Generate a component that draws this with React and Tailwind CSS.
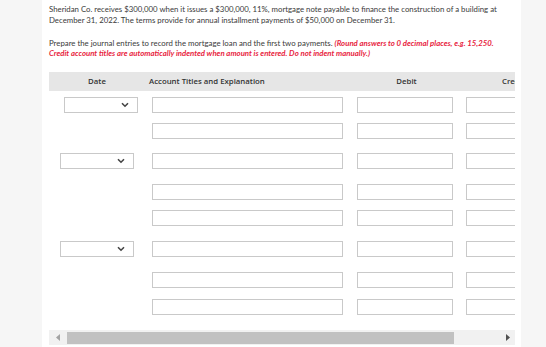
import React from "react";

const rows = [
  { date: true, sel: "ml-[15px]", mt: "mt-[6px]" },
  { date: false, mt: "mt-[10px]" },
  { date: true, sel: "ml-[11px]", mt: "mt-[14px]" },
  { date: false, mt: "mt-[15px]" },
  { date: false, mt: "mt-[10px]" },
  { date: true, sel: "ml-[11px]", mt: "mt-[15px]" },
  { date: false, mt: "mt-[15px]" },
  { date: false, mt: "mt-[11px]" },
];

const Chevron = () => (
  <svg width="8" height="6" viewBox="0 0 8 6" className="mr-[8px]">
    <path d="M1 1.2 L4 4.2 L7 1.2" fill="none" stroke="#444" strokeWidth="1.6" />
  </svg>
);

const Box = ({ className }) => (
  <div className={`h-[16px] border border-[#c9c9c9] bg-white ${className}`} />
);

const JournalRow = ({ row }) => (
  <div className={`grid grid-cols-[96px_207px_109px_109px] ${row.mt}`}>
    <div className="flex">
      {row.date && (
        <div className={`flex h-[16px] w-[74px] items-center justify-end border border-[#c9c9c9] bg-white ${row.sel}`}>
          <Chevron />
        </div>
      )}
    </div>
    <div className="pl-[7px]">
      <Box className="w-[191px]" />
    </div>
    <div className="pl-[5px]">
      <Box className="w-[96px]" />
    </div>
    <div className="pl-[5px]">
      <Box className="w-[96px]" />
    </div>
  </div>
);

export default function App() {
  return (
    <div className="flex h-[347px] w-[546px] overflow-hidden bg-[#f6f6f6] text-[#333]">
      <div className="w-[42px] shrink-0" />
      <div className="w-[479px] shrink-0 bg-white pl-[7px] pt-[4px]">
        <div className="font-['Lato',sans-serif] text-[7.8px] leading-[11px] text-[#3a3a3a]">
          <p className="whitespace-nowrap">
            Sheridan Co. receives $300,000 when it issues a $300,000, 11%, mortgage note payable to finance the construction of a building at
            <br />
            December 31, 2022. The terms provide for annual installment payments of $50,000 on December 31.
          </p>
          <p className="mt-[12px] whitespace-nowrap leading-[10px]">
            Prepare the journal entries to record the mortgage loan and the first two payments.{" "}
            <span className="font-bold italic text-[#e8243e]">
              (Round answers to 0 decimal places, e.g. 15,250.
              <br />
              Credit account titles are automatically indented when amount is entered. Do not indent manually.)
            </span>
          </p>
        </div>

        <div className="mt-[14px] w-[466px] overflow-hidden">
          <div className="grid h-[19px] grid-cols-[96px_207px_109px_109px] items-center bg-[#e6e6e6] font-['Open_Sans',sans-serif] text-[7.8px] font-semibold text-[#333]">
            <div className="text-center">Date</div>
            <div className="pl-[4px]">Account Titles and Explanation</div>
            <div className="text-center">Debit</div>
            <div className="pl-[41px]">Credit</div>
          </div>

          {rows.map((row, i) => (
            <JournalRow key={i} row={row} />
          ))}

          <div className="mt-[15px] flex h-[15px] items-center bg-[#f1f1f1]">
            <div className="flex w-[18px] justify-center">
              <svg width="4" height="7" viewBox="0 0 4 7">
                <path d="M4 0 L0 3.5 L4 7 Z" fill="#a3a3a3" />
              </svg>
            </div>
            <div className="h-[12px] w-[387px] bg-[#c1c1c1]" />
            <div className="flex flex-1 justify-end pr-[5px]">
              <svg width="4" height="7" viewBox="0 0 4 7">
                <path d="M0 0 L4 3.5 L0 7 Z" fill="#505050" />
              </svg>
            </div>
          </div>
        </div>
      </div>
      <div className="flex-1" />
    </div>
  );
}
